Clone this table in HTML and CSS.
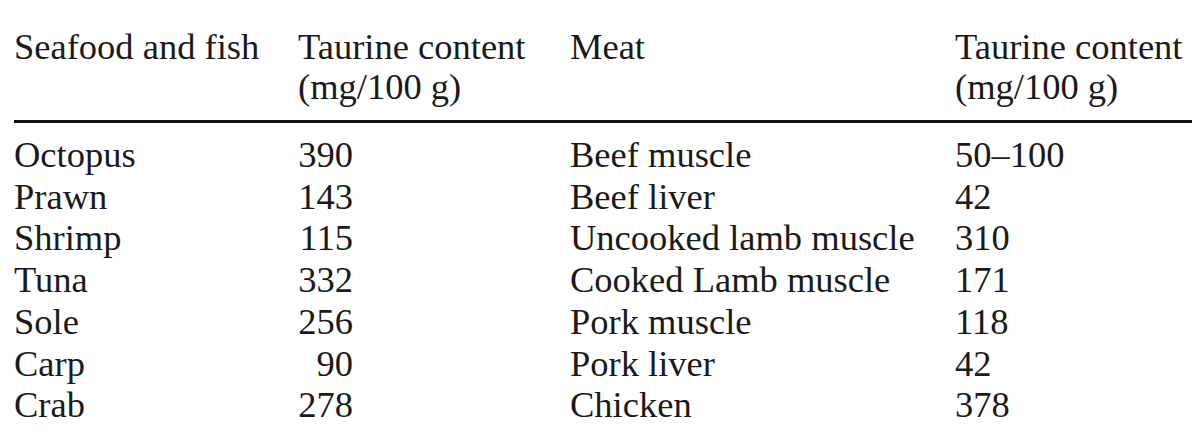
FILE: index.html
```html
<!DOCTYPE html>
<html lang="en">
<head>
<meta charset="utf-8">
<title>Taurine content of seafood and meat</title>
<link rel="stylesheet" href="styles.css">
</head>
<body>
<div class="table">
  <div class="thead">
    <div class="cell">Seafood and fish</div>
    <div class="cell">Taurine content<br>(mg/100 g)</div>
    <div class="cell">Meat</div>
    <div class="cell">Taurine content<br>(mg/100 g)</div>
  </div>
  <div class="tbody">
    <div class="cell">Octopus</div><div class="cell"><span class="num">390</span></div><div class="cell">Beef muscle</div><div class="cell">50–100</div>
    <div class="cell">Prawn</div><div class="cell"><span class="num">143</span></div><div class="cell">Beef liver</div><div class="cell">42</div>
    <div class="cell">Shrimp</div><div class="cell"><span class="num">115</span></div><div class="cell">Uncooked lamb muscle</div><div class="cell">310</div>
    <div class="cell">Tuna</div><div class="cell"><span class="num">332</span></div><div class="cell">Cooked Lamb muscle</div><div class="cell">171</div>
    <div class="cell">Sole</div><div class="cell"><span class="num">256</span></div><div class="cell">Pork muscle</div><div class="cell">118</div>
    <div class="cell">Carp</div><div class="cell"><span class="num">90</span></div><div class="cell">Pork liver</div><div class="cell">42</div>
    <div class="cell">Crab</div><div class="cell"><span class="num">278</span></div><div class="cell">Chicken</div><div class="cell">378</div>
  </div>
</div>
</body>
</html>
```

FILE: styles.css
```css
html, body {
  margin: 0;
  padding: 0;
  background: #ffffff;
}

body {
  font-family: "Liberation Serif", "Times New Roman", serif;
  font-size: 36.5px;
  color: #1a1a1a;
}

.table {
  margin-left: 14px;
  width: 1178px;
  padding-top: 27px;
}

.thead,
.tbody {
  display: grid;
  grid-template-columns: 284px 272px 385px 1fr;
}

.thead {
  line-height: 40px;
  padding-bottom: 13px;
  border-bottom: 3px solid #111111;
}

.tbody {
  padding-top: 11px;
  line-height: 41.7px;
}

.cell {
  white-space: nowrap;
}

.num {
  display: inline-block;
  width: 55px;
  text-align: right;
}
```
